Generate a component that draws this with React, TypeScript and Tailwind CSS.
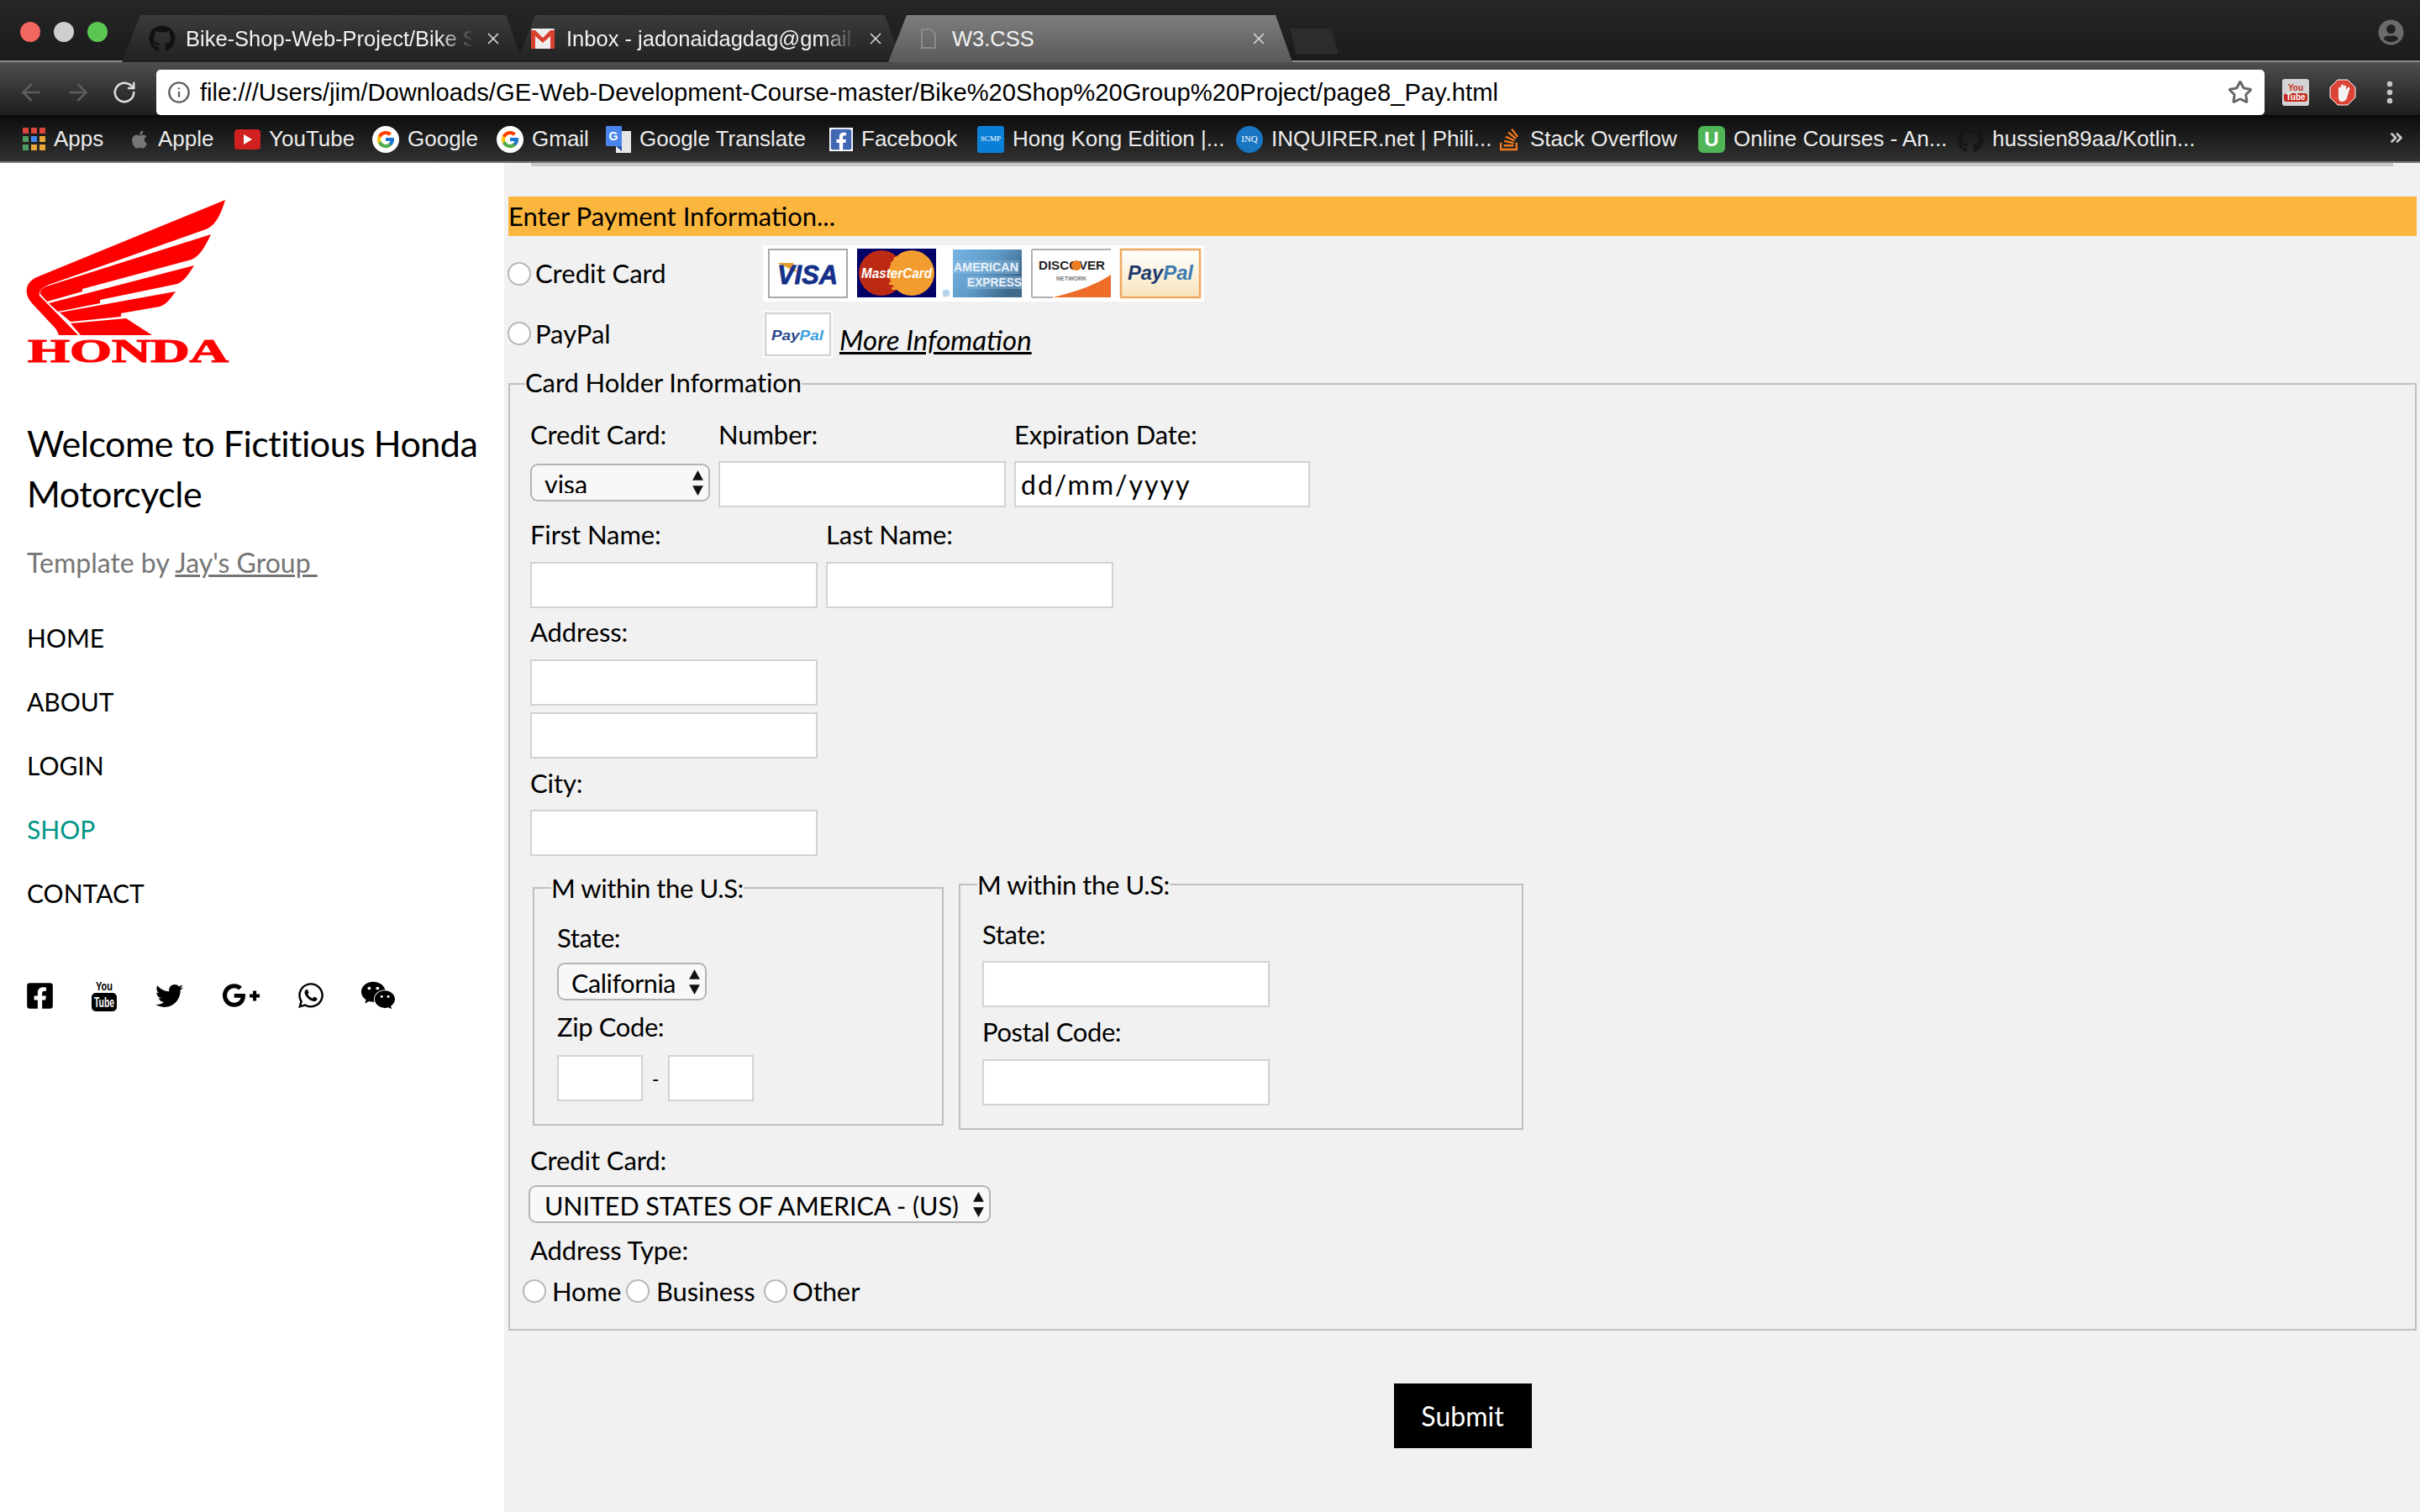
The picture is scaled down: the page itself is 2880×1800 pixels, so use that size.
import React from "react";
import { ArrowLeft, ArrowRight, RotateCw, Info, Star, X, EllipsisVertical, ChevronsRight } from "lucide-react";
import { FaGithub, FaApple, FaFacebookSquare, FaStackOverflow, FaTwitter, FaGooglePlusG, FaWhatsapp, FaWeixin, FaUserCircle } from "react-icons/fa";
import { FcGoogle } from "react-icons/fc";

function HondaLogo() {
  return (
    <svg viewBox="0 230 290 210" className="w-[290px] h-[210px] -ml-[32px] block">
      <g fill="#ff0000">
        <path d="M268 238 C262 258 256 268 245 273 L58 339 C50 342 46 346 47 352 L93 399 L70 399 C69 396 68 394 66 391 L38 361 C32 354 31 348 32 343 C33 337 38 332 46 329 Z" />
        <path d="M251 279 C243 296 237 305 228 309 L98 344 L98 347 L56 359 L48 350 C47 346 50 343 55 341 Z" />
        <path d="M231 316 C224 328 218 335 211 338 L119 357 L119 361 L69 371 L58 361 Z" />
        <path d="M209 347 C202 357 197 363 190 365 L144 373 L144 377 L84 383 L71 372 Z" />
        <path d="M150 379 L181 399 L96 399 L84 385 Z" />
        <text x="33" y="431" fontFamily="'Liberation Serif', serif" fontWeight="700" fontSize="40" textLength="239" lengthAdjust="spacingAndGlyphs" stroke="#ff0000" strokeWidth="1.2">HONDA</text>
      </g>
    </svg>
  );
}

function CardStrip() {
  return (
    <svg viewBox="0 0 525 67" className="w-[525px] h-[67px] block">
      <defs>
        <linearGradient id="amex" x1="0" x2="1" y1="0" y2="0.5">
          <stop offset="0" stopColor="#78b4e4" />
          <stop offset="0.55" stopColor="#5f9bc8" />
          <stop offset="1" stopColor="#3f6a8c" />
        </linearGradient>
        <linearGradient id="ppbg" x1="0" x2="0" y1="0" y2="1">
          <stop offset="0" stopColor="#ffffff" />
          <stop offset="1" stopColor="#f9e4bd" />
        </linearGradient>
      </defs>
      <rect width="525" height="67" fill="#fff" />
      <rect x="7" y="5" width="93" height="57" fill="#fff" stroke="#a8a8a8" strokeWidth="2" />
      <path d="M17 21 L36 21 L40 32 Z" fill="#e6a030" />
      <text x="53" y="46" textAnchor="middle" fontFamily="'Liberation Sans',sans-serif" fontWeight="700" fontStyle="italic" fontSize="31" fill="#14308a" stroke="#14308a" strokeWidth="0.8" textLength="72" lengthAdjust="spacingAndGlyphs">VISA</text>
      <rect x="112" y="4" width="94" height="58" fill="#000066" />
      <circle cx="141" cy="33" r="27" fill="#bd2a14" />
      <circle cx="177" cy="33" r="27" fill="#f29c30" />
      <g fill="#f29c30">
        <rect x="156" y="14" width="8" height="3" />
        <rect x="152" y="20" width="14" height="3" />
        <rect x="150" y="44" width="16" height="3" />
        <rect x="153" y="50" width="12" height="3" />
      </g>
      <text x="159" y="39" textAnchor="middle" fontFamily="'Liberation Sans',sans-serif" fontWeight="700" fontStyle="italic" fontSize="17" fill="#fff" textLength="84" lengthAdjust="spacingAndGlyphs">MasterCard</text>
      <circle cx="218" cy="57" r="4.5" fill="#b6d3ea" />
      <rect x="226" y="5" width="82" height="57" fill="url(#amex)" />
      <rect x="226" y="18" width="79" height="16" fill="#8dbbe0" opacity="0.45" />
      <rect x="242" y="37" width="66" height="15" fill="#8dbbe0" opacity="0.45" />
      <text x="227" y="31" fontFamily="'Liberation Sans',sans-serif" fontWeight="700" fontSize="14" fill="#e8f2fa" textLength="77" lengthAdjust="spacingAndGlyphs">AMERICAN</text>
      <text x="243" y="49" fontFamily="'Liberation Sans',sans-serif" fontWeight="700" fontSize="14" fill="#e8f2fa" textLength="65" lengthAdjust="spacingAndGlyphs">EXPRESS</text>
      <rect x="320" y="5" width="94" height="57" fill="#fff" />
      <path d="M320 5 H414 M320 5 V62" stroke="#b0b0b0" strokeWidth="2" fill="none" />
      <path d="M345 62 C375 55 400 45 414 35 L414 62 Z" fill="#ec6c28" />
      <path d="M320 62 H345" stroke="#b0b0b0" strokeWidth="2" />
      <text x="328" y="29" fontFamily="'Liberation Sans',sans-serif" fontWeight="700" fontSize="15" fill="#222" textLength="79" lengthAdjust="spacingAndGlyphs">DISCOVER</text>
      <circle cx="373" cy="24" r="6" fill="#ee7d22" />
      <text x="367" y="42" textAnchor="middle" fontFamily="'Liberation Sans',sans-serif" fontWeight="700" fontSize="7" fill="#777">NETWORK</text>
      <rect x="426" y="5" width="94" height="57" fill="url(#ppbg)" stroke="#efa85f" strokeWidth="2.5" />
      <text x="473" y="41" textAnchor="middle" fontFamily="'Liberation Sans',sans-serif" fontWeight="700" fontStyle="italic" fontSize="23" fill="#1d3a6e" textLength="78" lengthAdjust="spacingAndGlyphs">
        Pay<tspan fill="#3b7cb0">Pal</tspan>
      </text>
    </svg>
  );
}

function SmallPayPal() {
  return (
    <svg viewBox="0 0 83 56" className="w-[83px] h-[56px] block shrink-0">
      <rect width="83" height="56" fill="#fff" />
      <rect x="3" y="3" width="77" height="50" fill="#fff" stroke="#d4d4d4" strokeWidth="2.5" />
      <text x="41" y="35" textAnchor="middle" fontFamily="'Liberation Sans',sans-serif" fontWeight="700" fontStyle="italic" fontSize="17" fill="#2b4a8c" textLength="62" lengthAdjust="spacingAndGlyphs">
        Pay<tspan fill="#3aa0dd">Pal</tspan>
      </text>
    </svg>
  );
}

function SocialYoutube() {
  return (
    <svg viewBox="0 0 30 38" className="w-[30px] h-[38px] block">
      <text x="15" y="13" textAnchor="middle" fontFamily="'Liberation Sans',sans-serif" fontWeight="700" fontSize="15" textLength="20" lengthAdjust="spacingAndGlyphs">You</text>
      <rect x="0" y="16" width="30" height="22" rx="5" fill="#000" />
      <text x="15" y="33" textAnchor="middle" fontFamily="'Liberation Sans',sans-serif" fontWeight="700" fontSize="16" fill="#fff" textLength="24" lengthAdjust="spacingAndGlyphs">Tube</text>
    </svg>
  );
}

function Gmail() {
  return (
    <svg viewBox="0 0 28 24" className="w-[28px] h-[24px] block shrink-0">
      <rect width="28" height="24" rx="2" fill="#eee" />
      <path d="M0 2 L5 2 L14 11 L23 2 L28 2 L28 24 L23 24 L23 9 L14 17 L5 9 L5 24 L0 24 Z" fill="#d8402f" />
    </svg>
  );
}

function Tab({ w, ml, iconMl, closeMr, active, icon, title, fade }: { w: string; ml: string; iconMl: string; closeMr: string; active?: boolean; icon: React.ReactNode; title: string; fade?: boolean }) {
  return (
    <div className={`${w} ${ml} relative h-[56px] flex items-center ${active ? "z-10 bg-gradient-to-b from-[#7e7e7e] to-[#5a5a5a]" : "bg-gradient-to-b from-[#3c3c3c] to-[#212121]"} [clip-path:polygon(22px_0,calc(100%-20px)_0,100%_100%,0_100%)]`}>
      <div className={`w-[32px] ${iconMl} shrink-0 flex justify-center`}>{icon}</div>
      <span className={`ml-[12px] flex-1 overflow-hidden whitespace-nowrap text-[25.5px] text-[#f2f2f2] ${fade ? "[mask-image:linear-gradient(to_right,black_88%,transparent)]" : ""}`}>{title}</span>
      <X size={22} strokeWidth={1.8} className={`ml-[12px] ${closeMr} shrink-0 text-[#d8d8d8]`} />
    </div>
  );
}

const bookmarks: { w: string; icon: React.ReactNode; label: string }[] = [
  {
    w: "w-[127px]",
    label: "Apps",
    icon: (
      <div className="grid grid-cols-3 gap-[3px] w-[27px] shrink-0">
        <i className="h-[7px] bg-[#d9453a]" /><i className="h-[7px] bg-[#d9453a]" /><i className="h-[7px] bg-[#d9453a]" />
        <i className="h-[7px] bg-[#4f9c5f]" /><i className="h-[7px] bg-[#4087f0]" /><i className="h-[7px] bg-[#e8a83a]" />
        <i className="h-[7px] bg-[#4f9c5f]" /><i className="h-[7px] bg-[#e8a83a]" /><i className="h-[7px] bg-[#e8a83a]" />
      </div>
    ),
  },
  { w: "w-[125px]", label: "Apple", icon: <FaApple size={24} className="text-[#777] shrink-0" /> },
  {
    w: "w-[164px]",
    label: "YouTube",
    icon: (
      <div className="w-[31px] h-[24px] rounded-[4px] bg-[#d02020] flex items-center justify-center shrink-0">
        <div className="w-0 h-0 border-y-[6px] border-y-transparent border-l-[10px] border-l-white" />
      </div>
    ),
  },
  {
    w: "w-[148px]",
    label: "Google",
    icon: <div className="w-[32px] h-[32px] rounded-full bg-white flex items-center justify-center shrink-0"><FcGoogle size={24} /></div>,
  },
  {
    w: "w-[130px]",
    label: "Gmail",
    icon: <div className="w-[32px] h-[32px] rounded-full bg-white flex items-center justify-center shrink-0"><FcGoogle size={24} /></div>,
  },
  {
    w: "w-[266px]",
    label: "Google Translate",
    icon: (
      <svg viewBox="0 0 30 32" className="w-[30px] h-[32px] shrink-0">
        <rect x="12" y="6" width="18" height="26" fill="#e6e6e6" />
        <rect x="0" y="0" width="19" height="24" rx="1" fill="#4a85ee" />
        <path d="M12 24 L19 24 L19 30 Z" fill="#2a56a8" />
        <text x="9" y="17" textAnchor="middle" fontSize="14" fontWeight="700" fill="#fff" fontFamily="'Liberation Sans',sans-serif">G</text>
      </svg>
    ),
  },
  {
    w: "w-[176px]",
    label: "Facebook",
    icon: <FaFacebookSquare size={28} className="text-[#4267b2] shrink-0 bg-white" />,
  },
  {
    w: "w-[308px]",
    label: "Hong Kong Edition |...",
    icon: <div className="w-[32px] h-[32px] rounded-[3px] bg-[#0a7fd6] text-white text-[9px] flex items-center justify-center shrink-0 font-['Liberation_Serif',serif]">SCMP</div>,
  },
  {
    w: "w-[310px]",
    label: "INQUIRER.net | Phili...",
    icon: <div className="w-[32px] h-[32px] rounded-full bg-[#1976c2] text-white text-[11px] flex items-center justify-center shrink-0 font-['Liberation_Serif',serif]">INQ</div>,
  },
  {
    w: "w-[240px]",
    label: "Stack Overflow",
    icon: <FaStackOverflow size={30} className="text-[#ef7a20] shrink-0" />,
  },
  {
    w: "w-[308px]",
    label: "Online Courses - An...",
    icon: <div className="w-[32px] h-[32px] rounded-[6px] bg-[#4fb556] text-white text-[24px] font-bold flex items-center justify-center shrink-0">U</div>,
  },
  { w: "w-[480px]", label: "hussien89aa/Kotlin...", icon: <FaGithub size={32} className="text-[#161616] shrink-0" /> },
];

function Browser() {
  return (
    <header className="font-['Liberation_Sans',sans-serif]">
      <div className="h-[74px] bg-gradient-to-b from-[#262626] to-[#1b1b1b] border-b-2 border-[#8c8c8c] flex items-end relative">
        <div className="flex items-center gap-[16px] pl-[24px] w-[145px] h-[76px] shrink-0 pb-0 self-start">
          <i className="w-[24px] h-[24px] rounded-full bg-[#f1665e]" />
          <i className="w-[24px] h-[24px] rounded-full bg-[#cfcfcf]" />
          <i className="w-[24px] h-[24px] rounded-full bg-[#5cc653]" />
        </div>
        <div className="flex items-end -mb-[2px]">
          <Tab w="w-[477px]" ml="ml-0" iconMl="ml-[32px]" closeMr="mr-[24px]" fade icon={<FaGithub size={32} className="text-[#111]" />} title="Bike-Shop-Web-Project/Bike Shop" />
          <Tab w="w-[458px]" ml="-ml-[7px]" iconMl="ml-[15px]" closeMr="mr-[20px]" fade icon={<Gmail />} title="Inbox - jadonaidagdag@gmail.com" />
          <Tab w="w-[481px]" ml="-ml-[16px]" iconMl="ml-[32px]" closeMr="mr-[29px]" active icon={<svg viewBox="0 0 20 24" className="w-[20px] h-[24px]"><path d="M2 1 H13 L18 6 V23 H2 Z" fill="none" stroke="#8a8a8a" strokeWidth="2" /></svg>} title="W3.CSS" />
          <div className="w-[58px] h-[30px] mb-[10px] -ml-[3px] bg-[#2c2c2c] [clip-path:polygon(0_0,85%_0,100%_100%,12%_100%)]" />
        </div>
        <FaUserCircle size={31} className="absolute right-[19px] top-[23px] text-[#6a6a6a]" />
      </div>
      <div className="h-[65px] pt-[9px] bg-gradient-to-b from-[#4e4e4e] to-[#1e1e1e] border-b-2 border-[#080808] flex items-center">
        <div className="w-[186px] shrink-0 flex items-center pl-[21px] gap-[24px]">
          <ArrowLeft size={32} className="text-[#5e5e5e]" />
          <ArrowRight size={32} className="text-[#5e5e5e]" />
          <RotateCw size={30} className="text-[#dddddd]" />
        </div>
        <div className="w-[2509px] h-[54px] rounded-[5px] bg-white flex items-center pl-[13px] shrink-0">
          <Info size={28} className="text-[#5f5f5f] shrink-0" />
          <span className="ml-[11px] pt-[2px] text-[29.2px] text-black whitespace-nowrap flex-1">file:///Users/jim/Downloads/GE-Web-Development-Course-master/Bike%20Shop%20Group%20Project/page8_Pay.html</span>
          <Star size={30} strokeWidth={2.4} className="text-[#666] mr-[14px] shrink-0" />
        </div>
        <div className="ml-[21px] w-[32px] h-[32px] rounded-[3px] bg-[#d4d4d4] flex flex-col items-center justify-center leading-none text-[#c22a22] text-[10px] font-bold shrink-0">
          <span>You</span>
          <span className="bg-[#c22a22] text-white rounded-[3px] px-[2px] mt-[1px]">Tube</span>
        </div>
        <svg viewBox="0 0 32 32" className="ml-[24px] w-[32px] h-[32px] shrink-0">
          <path d="M10 1 H22 L31 10 V22 L22 31 H10 L1 22 V10 Z" fill="#db4437" stroke="#fff" strokeWidth="1" />
          <path d="M11 22 V11 a1.5 1.5 0 0 1 3 0 V8 a1.5 1.5 0 0 1 3 0 V9 a1.5 1.5 0 0 1 3 0 V13 l2-3 a1.4 1.4 0 0 1 2.4 1.2 L21 23 Q19 27 15 27 Q11 27 11 22 Z" fill="#f4f4f4" />
        </svg>
        <EllipsisVertical size={34} strokeWidth={2.6} className="ml-[23px] text-[#c8c8c8] shrink-0" />
      </div>
      <div className="h-[55px] bg-gradient-to-b from-[#0e0e0e] to-[#313131] border-b-2 border-[#7a7a7a] flex items-center pl-[27px] relative">
        {bookmarks.map((b) => (
          <div key={b.label} className={`${b.w} shrink-0 flex items-center`}>
            <div className="flex items-center gap-[10px] text-[26px] text-[#ececec] whitespace-nowrap">
              {b.icon}
              <span>{b.label}</span>
            </div>
          </div>
        ))}
        <ChevronsRight size={22} strokeWidth={3} className="absolute right-[17px] top-[14px] text-[#c8c8c8]" />
      </div>
    </header>
  );
}

function Sidebar() {
  const nav = ["HOME", "ABOUT", "LOGIN", "SHOP", "CONTACT"];
  return (
    <aside className="w-[600px] shrink-0 bg-white pl-[32px] pt-[36px]">
      <HondaLogo />
      <h1 className="mt-[58px] text-[43px] leading-[60px] text-black font-normal tracking-[-0.5px]">Welcome to Fictitious Honda<br />Motorcycle</h1>
      <p className="mt-[34px] text-[32px] leading-[36px] text-[#757575]">
        Template by <a className="underline">Jay's Group&nbsp;</a>
      </p>
      <nav className="mt-[33px]">
        {nav.map((n) => (
          <div key={n} className={`h-[76px] flex items-center text-[30px] ${n === "SHOP" ? "text-[#009688]" : "text-black"}`}>{n}</div>
        ))}
      </nav>
      <div className="mt-[59px] h-[50px] flex items-center">
        <FaFacebookSquare size={35} className="-ml-[2px]" />
        <div className="ml-[44px]"><SocialYoutube /></div>
        <FaTwitter size={33} className="ml-[46px]" />
        <FaGooglePlusG size={46} className="ml-[46px]" />
        <FaWhatsapp size={34} className="ml-[43px]" />
        <FaWeixin size={42} className="ml-[42px]" />
      </div>
    </aside>
  );
}

function TextBox({ w = "w-[342px]", value }: { w?: string; value?: string }) {
  return (
    <input
      readOnly
      defaultValue={value}
      className={`${w} h-[55px] block bg-white border-2 border-[#d2d2d2] px-[6px] text-[32px] text-black tracking-[2px] outline-none`}
    />
  );
}

function Label({ children, className = "" }: { children: React.ReactNode; className?: string }) {
  return <div className={`h-[36px] leading-[36px] whitespace-nowrap ${className}`}>{children}</div>;
}

function Select({ w, label, pad }: { w: string; label: string; pad: string }) {
  return (
    <div className={`relative ${w} h-[45px]`}>
      <select className={`appearance-none w-full h-full rounded-[9px] border-2 border-[#b4b4b4] bg-[#f8f8f8] ${pad} text-[30.5px] text-black outline-none`}>
        <option>{label}</option>
      </select>
      <svg viewBox="0 0 14 30" className="absolute right-[7px] top-[7px] w-[15px] h-[32px]">
        <path d="M7 1 L13 12 H1 Z M7 29 L13 18 H1 Z" fill="#111" />
      </svg>
    </div>
  );
}

function Radio({ className = "" }: { className?: string }) {
  return <input type="radio" className={`appearance-none w-[28px] h-[28px] rounded-full bg-white border-2 border-[#b8b8b8] shrink-0 ${className}`} />;
}

function PaymentForm() {
  return (
    <main className="flex-1 bg-[#f1f1f1] min-h-[1606px] text-black">
      <div className="h-[4px] bg-[#c8c8c8] ml-[32px] mr-[32px]" />
      <div className="pl-[5px] pr-[4px] mt-[36px]">
        <div className="h-[47px] bg-[#fbb63d] flex items-center text-[31px]">Enter Payment Information...</div>
        <div className="mt-[11px] h-[67px] flex items-center">
          <div className="w-[304px] flex items-center gap-[5px] text-[31px] -ml-[1px]"><Radio /><span>Credit Card</span></div>
          <CardStrip />
        </div>
        <div className="mt-[11px] h-[56px] flex items-center">
          <div className="w-[304px] flex items-center gap-[5px] text-[31px] -ml-[1px] -mt-[2px]"><Radio /><span>PayPal</span></div>
          <SmallPayPal />
          <a className="ml-[8px] mt-[14px] text-[33px] italic underline whitespace-nowrap">More Infomation</a>
        </div>

        <fieldset className="mt-[13px] border-2 border-[#c0c0c0] pl-[24px] pt-[24px] pb-[27px] text-[31px] tracking-[-0.1px]">
          <legend className="-ml-[6px] h-[36px] leading-[33px]">Card Holder Information</legend>

          <div className="flex">
            <div className="w-[224px]">
              <Label>Credit Card:</Label>
              <div className="mt-[17px]"><Select w="w-[214px]" label="visa" pad="pl-[15px] pb-[8px]" /></div>
            </div>
            <div className="w-[352px]">
              <Label>Number:</Label>
              <div className="mt-[14px]"><TextBox /></div>
            </div>
            <div>
              <Label>Expiration Date:</Label>
              <div className="mt-[14px]"><TextBox w="w-[352px]" value="dd/mm/yyyy" /></div>
            </div>
          </div>

          <div className="flex mt-[14px] gap-[10px]">
            <div>
              <Label>First Name:</Label>
              <div className="mt-[15px]"><TextBox /></div>
            </div>
            <div>
              <Label>Last Name:</Label>
              <div className="mt-[15px]"><TextBox /></div>
            </div>
          </div>

          <Label className="mt-[10px]">Address:</Label>
          <div className="mt-[15px]"><TextBox /></div>
          <div className="mt-[8px]"><TextBox /></div>
          <Label className="mt-[11px]">City:</Label>
          <div className="mt-[14px]"><TextBox /></div>

          <div className="flex items-start mt-[16px]">
            <fieldset className="mt-[4px] ml-[3px] w-[489px] border-2 border-[#c0c0c0] pl-[27px] pt-[23px] pb-[27px] tracking-[-0.4px]">
              <legend className="-ml-[7px] px-0 h-[36px] leading-[36px]">M within the U.S:</legend>
              <Label>State:</Label>
              <div className="mt-[12px]"><Select w="w-[178px]" label="California" pad="pl-[15px] pb-[4px]" /></div>
              <Label className="mt-[13px]">Zip Code:</Label>
              <div className="mt-[16px] flex items-center">
                <TextBox w="w-[102px]" />
                <span className="w-[30px] text-center text-[24px]">-</span>
                <TextBox w="w-[102px]" />
              </div>
            </fieldset>
            <fieldset className="ml-[18px] w-[672px] border-2 border-[#c0c0c0] pl-[26px] pt-[23px] pb-[27px] tracking-[-0.4px]">
              <legend className="-ml-[6px] h-[36px] leading-[36px]">M within the U.S:</legend>
              <Label>State:</Label>
              <div className="mt-[14px]"><TextBox /></div>
              <Label className="mt-[11px]">Postal Code:</Label>
              <div className="mt-[15px]"><TextBox /></div>
            </fieldset>
          </div>

          <Label className="mt-[18px]">Credit Card:</Label>
          <div className="mt-[12px] -ml-[2px]"><Select w="w-[550px]" label="UNITED STATES OF AMERICA - (US)" pad="pl-[17px] pb-[4px]" /></div>
          <Label className="mt-[14px]">Address Type:</Label>
          <div className="mt-[13px] h-[36px] -ml-[9px] flex items-center">
            <Radio /><span className="ml-[7px] w-[88px]">Home</span>
            <Radio /><span className="ml-[8px] w-[128px]">Business</span>
            <Radio /><span className="ml-[6px]">Other</span>
          </div>
        </fieldset>

        <button className="block mx-auto mt-[63px] w-[164px] h-[77px] bg-black text-white text-[32px]">Submit</button>
      </div>
    </main>
  );
}

export default function App() {
  return (
    <div className="w-[2880px] h-[1800px] overflow-hidden bg-white font-[Lato,sans-serif]">
      <Browser />
      <div className="flex">
        <Sidebar />
        <PaymentForm />
      </div>
    </div>
  );
}
